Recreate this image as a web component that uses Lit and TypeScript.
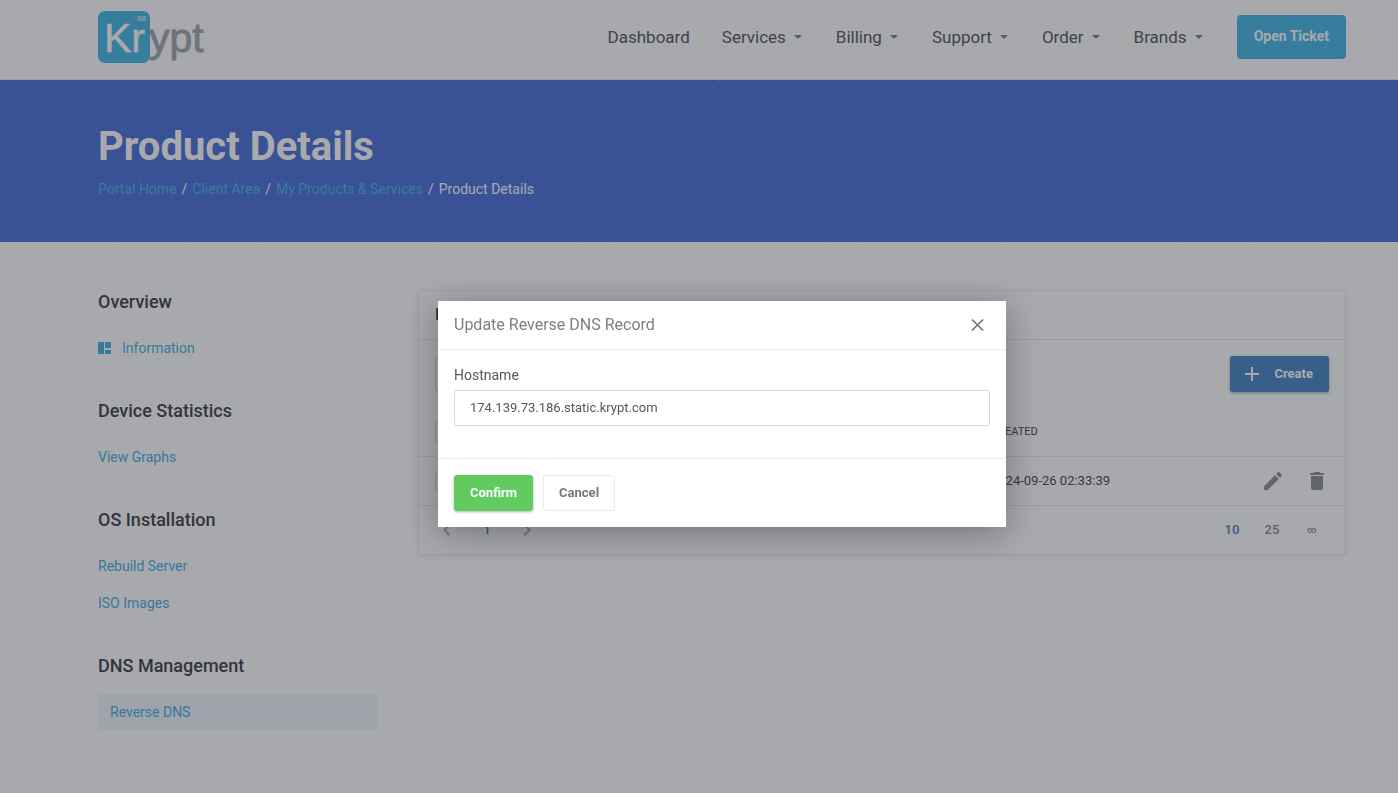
import { LitElement, html, svg, css } from "lit";
import { customElement, property, state } from "lit/decorators.js";

interface NavItem { label: string; menu: boolean; }
interface SideLink { label: string; icon?: boolean; active?: boolean; }
interface SideGroup { title: string; links: SideLink[]; }

const NAV: NavItem[] = [
  { label: "Dashboard", menu: false },
  { label: "Services", menu: true },
  { label: "Billing", menu: true },
  { label: "Support", menu: true },
  { label: "Order", menu: true },
  { label: "Brands", menu: true },
];

const GROUPS: SideGroup[] = [
  { title: "Overview", links: [{ label: "Information", icon: true }] },
  { title: "Device Statistics", links: [{ label: "View Graphs" }] },
  { title: "OS Installation", links: [{ label: "Rebuild Server" }, { label: "ISO Images" }] },
  { title: "DNS Management", links: [{ label: "Reverse DNS", active: true }] },
];

const base = css`
  :host { display: block; font-family: Roboto, "Liberation Sans", sans-serif; }
  *, *::before, *::after { box-sizing: border-box; }
  a { text-decoration: none; }
  button, input { font-family: inherit; margin: 0; }
  svg { display: block; }
`;

@customElement("site-header")
class SiteHeader extends LitElement {
  static styles = [base, css`
    .bar { display: flex; align-items: center; justify-content: space-between; height: 80px;
      padding: 0 52px 5px 98px; border-bottom: 1px solid #e4e5ec; background: #fff; }
    .logo text { font-family: "Liberation Sans", Arial, sans-serif; }
    .menu { display: flex; align-items: center; gap: 34px; }
    .item { display: flex; align-items: center; gap: 8px; padding: 0; border: 0; background: none;
      font-size: 17px; line-height: 24px; color: #5a5d64; }
    .item:first-child { margin-right: -2px; }
    .caret { color: #80838a; }
    .ticket { height: 44px; padding: 0 17px 2px; border: 0; border-radius: 4px; background: #4db9e6;
      color: #fff; font-size: 14px; font-weight: 700; }
  `];
  render() {
    return html`<header class="bar">
      <a href="#" aria-label="Krypt"><svg class="logo" width="110" height="54" viewBox="0 0 110 54">
        <rect x="0" y="1" width="52" height="52" rx="7" fill="#4db9e6" />
        <text x="6" y="42" font-size="41" fill="#fff" stroke="#fff" stroke-width=".5">Kr</text>
        <text x="39" y="11" font-size="8" fill="#fff">98</text>
        <text x="51" y="42" font-size="41" fill="#a6a8ae" stroke="#a6a8ae" stroke-width=".8">ypt</text>
      </svg></a>
      <nav class="menu">
        ${NAV.map((n) => n.menu
          ? html`<button class="item">${n.label}
              <svg class="caret" width="8" height="4" viewBox="0 0 8 4"><path d="M0 0h8L4 4z" fill="currentColor" /></svg></button>`
          : html`<a class="item" href="#">${n.label}</a>`)}
        <button class="ticket">Open Ticket</button>
      </nav>
    </header>`;
  }
}

@customElement("page-banner")
class PageBanner extends LitElement {
  static styles = [base, css`
    .banner { position: relative; overflow: hidden; padding: 43px 52px 42px 98px; background: #5075d9; }
    .grid { position: absolute; top: 0; left: 50%; margin-left: -1180px; }
    .content { position: relative; }
    h1 { margin: 0; font-size: 40px; line-height: 48px; font-weight: 700; color: #fff; }
    ol { display: flex; margin: 8px 0 0; padding: 0; list-style: none; font-size: 14px; line-height: 21px; color: #fff; }
    li + li::before { content: "/"; padding: 0 5px; }
    a { color: #4db9e6; }
  `];
  private lines() {
    const out = [];
    for (let i = -45; i <= 45; i++) {
      out.push(svg`<line x1=${1200 + i * 27} y1="0" x2=${1200 + i * 35.5} y2="162" />`);
    }
    for (const y of [7.5, 43.5, 84, 130]) out.push(svg`<line x1="0" y1=${y} x2="2400" y2=${y} />`);
    return out;
  }
  render() {
    return html`<section class="banner">
      <svg class="grid" width="2400" height="162" aria-hidden="true">
        <g stroke="#fff" stroke-opacity=".07" stroke-width="1.5" stroke-dasharray="3 7.2">${this.lines()}</g>
      </svg>
      <div class="content">
        <h1>Product Details</h1>
        <ol>
          <li><a href="#">Portal Home</a></li>
          <li><a href="#">Client Area</a></li>
          <li><a href="#">My Products &amp; Services</a></li>
          <li>Product Details</li>
        </ol>
      </div>
    </section>`;
  }
}

@customElement("side-menu")
class SideMenu extends LitElement {
  static styles = [base, css`
    .group { margin-bottom: 32px; }
    h2 { margin: 0 0 15px; font-size: 18px; line-height: 26px; font-weight: 500; color: #46484e; }
    .link { display: flex; align-items: center; gap: 11px; height: 36px; margin-bottom: 1px;
      border-radius: 4px; font-size: 14px; color: #4db3e0; }
    .active { padding: 0 12px; background: #f1f6fd; }
    .icon { width: 13px; height: 12px; }
  `];
  render() {
    return html`<nav>${GROUPS.map((g) => html`<section class="group">
      <h2>${g.title}</h2>
      ${g.links.map((l) => html`<a href="#" class="link ${l.active ? "active" : ""}">
        ${l.icon ? html`<svg class="icon" viewBox="0 0 13 12"><path d="M0 0h6v12H0zM7 0h6v6H7zM7 8h6v4H7z" fill="currentColor" /></svg>` : null}${l.label}</a>`)}
    </section>`)}</nav>`;
  }
}

@customElement("record-card")
class RecordCard extends LitElement {
  static styles = [base, css`
    .card { border: 1px solid #f0f0f5; border-radius: 4px; background: #fff; box-shadow: 0 1px 4px rgba(40, 45, 70, .1); }
    h3 { margin: 0; padding: 0 16px; font-size: 16px; line-height: 48px; font-weight: 500; color: #46484e; border-bottom: 1px solid #e9e9f0; }
    .tools { display: flex; justify-content: space-between; padding: 16px; }
    .search { width: 240px; height: 36px; border: 1px solid #d5d6e0; border-radius: 4px; padding: 0 16px; font-size: 13px; background: #fff; }
    .create { display: flex; align-items: center; gap: 10px; height: 36px; padding: 0 16px 0 10px; border: 0; border-radius: 3px;
      background: #4d8bc6; color: #fff; font-size: 13px; line-height: 16px; font-weight: 700; box-shadow: 0 1px 3px rgba(0, 0, 0, .35); }
    table { width: 100%; border-collapse: collapse; table-layout: fixed; text-align: left; color: #4c4f56; }
    th { height: 48px; padding: 0; font-size: 11px; font-weight: 400; text-transform: uppercase; border-bottom: 1px solid #e9e9f0; }
    td { height: 49px; padding: 0; font-size: 13px; border-bottom: 1px solid #e9e9f0; }
    .pick { width: 56px; padding-left: 16px; }
    .host { width: 30%; }
    .date { width: 280px; }
    .acts { width: 74px; }
    .tick { display: block; appearance: none; width: 20px; height: 20px; margin: 0; border: 1px solid #d5d6e0; border-radius: 3px; }
    .pair { display: flex; gap: 20px; justify-content: flex-end; padding-right: 16px; }
    .act { display: block; padding: 0; border: 0; background: none; color: #92949b; }
    .foot { display: flex; align-items: center; justify-content: space-between; height: 48px; padding: 0 13px 0 8px; }
    .pages { display: flex; }
    .page { display: flex; align-items: center; justify-content: center; width: 40px; height: 32px; padding: 0;
      border: 0; background: none; font-size: 13px; font-weight: 500; color: #8b8e95; }
    .on { color: #4d86c0; }
    .step { color: #b4b6bc; }
    .all { font-size: 9px; }
  `];
  render() {
    return html`<section class="card">
      <h3>Reverse DNS</h3>
      <div class="tools">
        <input class="search" aria-label="Search" />
        <button class="create"><svg width="24" height="24" viewBox="0 0 24 24"><path d="M12 5v14M5 12h14" stroke="currentColor" stroke-width="2" /></svg>Create</button>
      </div>
      <table>
        <thead><tr>
          <th class="pick"><input class="tick" type="checkbox" aria-label="Select all" /></th>
          <th>IP</th><th class="host">Hostname</th><th class="date">Created</th><th class="acts"></th>
        </tr></thead>
        <tbody><tr>
          <td class="pick"><input class="tick" type="checkbox" aria-label="Select record" /></td>
          <td>174.139.73.186</td><td>174.139.73.186.static.krypt.com</td><td>2024-09-26 02:33:39</td>
          <td><div class="pair">
            <button class="act" aria-label="Edit"><svg width="24" height="24" viewBox="0 0 24 24"><path fill="currentColor" d="M20.71 7.04c.39-.39.39-1.04 0-1.41l-2.34-2.34c-.37-.39-1.02-.39-1.41 0l-1.84 1.83 3.75 3.75M3 17.25V21h3.75L17.81 9.93l-3.75-3.75L3 17.25z" /></svg></button>
            <button class="act" aria-label="Delete"><svg width="24" height="24" viewBox="0 0 24 24"><path fill="currentColor" d="M19 4h-3.5l-1-1h-5l-1 1H5v2h14M6 19a2 2 0 0 0 2 2h8a2 2 0 0 0 2-2V7H6v12z" /></svg></button>
          </div></td>
        </tr></tbody>
      </table>
      <div class="foot">
        <div class="pages">
          <button class="page step" aria-label="Previous"><svg width="24" height="24" viewBox="0 0 24 24"><path fill="currentColor" d="M15.41 16.58 10.83 12l4.58-4.59L14 6l-6 6 6 6z" /></svg></button>
          <button class="page on">1</button>
          <button class="page step" aria-label="Next"><svg width="24" height="24" viewBox="0 0 24 24"><path fill="currentColor" d="M8.59 16.58 13.17 12 8.59 7.41 10 6l6 6-6 6z" /></svg></button>
        </div>
        <div class="pages">
          <button class="page on">10</button><button class="page">25</button><button class="page all">∞</button>
        </div>
      </div>
    </section>`;
  }
}

@customElement("record-dialog")
class RecordDialog extends LitElement {
  @property() value = "";
  static styles = [base, css`
    .shade { position: fixed; inset: 0; display: flex; align-items: center; justify-content: center;
      padding: 35px 0 0 46px; background: rgba(20, 22, 33, .37); }
    .dialog { width: 568px; max-width: 100%; background: #fff; box-shadow: 0 6px 32px rgba(10, 10, 15, .32); }
    .head { display: flex; align-items: center; justify-content: space-between; height: 49px; padding: 0 16px; border-bottom: 1px solid #e9e9f0; }
    h2 { margin: 0; font-size: 16px; line-height: 24px; font-weight: 400; color: #7c7f88; }
    .close { padding: 0; border: 0; background: none; color: #6c6f78; }
    .body { padding: 15px 16px 32px; }
    label { display: block; margin-bottom: 5px; font-size: 14px; line-height: 20px; color: #54575f; }
    .field { display: block; width: 100%; height: 36px; padding: 0 15px 1px; border: 1px solid #d8d9e4; border-radius: 3px;
      font-size: 13px; color: #54575f; outline: none; }
    .foot { display: flex; gap: 10px; padding: 16px; border-top: 1px solid #e9e9f0; }
    .btn { height: 36px; padding: 0 15px 2px; border: 1px solid #e8e8ef; border-radius: 3px; background: #fff;
      font-size: 13px; font-weight: 700; color: #74777f; }
    .confirm { border-color: #62cb60; background: #62cb60; color: #fff; box-shadow: 0 1px 3px rgba(0, 0, 0, .3); }
  `];
  render() {
    return html`<div class="shade"><div class="dialog" role="dialog" aria-labelledby="t">
      <div class="head"><h2 id="t">Update Reverse DNS Record</h2>
        <button class="close" aria-label="Close"><svg width="24" height="24" viewBox="0 0 24 24"><path d="M6 6.500l11 11M17 6.500l-11 11" stroke="currentColor" stroke-width="1.6" fill="none" /></svg></button></div>
      <div class="body"><label for="h">Hostname</label><input class="field" id="h" type="text" .value=${this.value} /></div>
      <div class="foot"><button class="btn confirm">Confirm</button><button class="btn">Cancel</button></div>
    </div></div>`;
  }
}

@customElement("app-root")
class AppRoot extends LitElement {
  @state() private hostname = "174.139.73.186.static.krypt.com";
  static styles = [base, css`
    :host { min-height: 100vh; background: #fff; }
    .main { display: grid; grid-template-columns: 279px minmax(0, 1fr); gap: 41px; align-items: start; padding: 47px 52px 0 98px; }
    .card { margin-top: 1px; }
  `];
  render() {
    return html`<site-header></site-header>
      <page-banner></page-banner>
      <main class="main"><side-menu></side-menu><record-card class="card"></record-card></main>
      <record-dialog .value=${this.hostname}></record-dialog>`;
  }
}
